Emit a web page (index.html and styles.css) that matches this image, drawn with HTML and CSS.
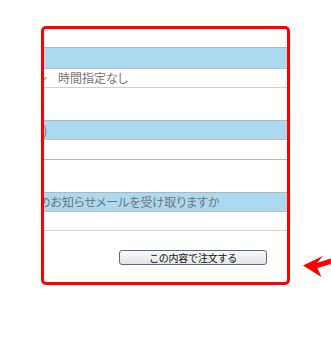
FILE: index.html
```html
<!DOCTYPE html>
<html>
<head>
    <title>ご注文内容の確認</title>
    <link rel="stylesheet" href="styles.css">
</head>
<body>
    <div class="page">
        <div class="confirm-box">
            <div class="spacer-top"></div>
            <div class="row row-blue row-first"></div>
            <div class="row row-text"><span class="cut">～</span><span class="value">時間指定なし</span></div>
            <div class="gap"></div>
            <div class="row row-blue"><span class="cut-paren">)</span></div>
            <div class="row row-empty"></div>
            <div class="gap"></div>
            <div class="row row-blue"><span class="cut-text">のお知らせメールを受け取りますか</span></div>
            <div class="row row-empty row-last"></div>
            <div class="submit-area">
                <button type="button" class="order-button">この内容で注文する</button>
            </div>
        </div>
        <!-- annotation arrow pointing at the order button -->
        <svg class="arrow" width="28" height="23" viewBox="0 0 28 23">
            <polygon points="0,10.5 20,1 14,8 28,3.5 28,9 14.5,13 18.5,22" fill="#ff0000"/>
        </svg>
    </div>
</body>
</html>
```

FILE: styles.css
```css
body {
    margin: 0;
    background-color: #fff;
    font-family: "Noto Sans CJK JP", "Noto Sans", sans-serif;
}
.page {
    display: flex;
    padding: 26px 0 0 41px;
}
.confirm-box {
    box-sizing: border-box;
    width: 250px;
    height: 259px;
    border: 3px solid #ff0000;
    border-radius: 5px;
    overflow: hidden;
    background: #fff;
}
.spacer-top {
    height: 18px;
}
.row {
    box-sizing: border-box;
    display: flex;
    align-items: center;
    font-size: 12px;
    color: #747474;
    white-space: nowrap;
    line-height: 1;
    font-feature-settings: "palt";
}
.row-blue {
    height: 20px;
    background-color: #aad9f0;
    border-top: 1px solid #b4b4b4;
    border-bottom: 1px solid #c0c0c0;
}
.row-first {
    height: 22px;
}
.row-text {
    height: 19px;
    border-bottom: 1px solid #cfcfcf;
}
.row-empty {
    height: 20px;
    border-bottom: 1px solid #b8b8b8;
}
.row-last {
    height: 19px;
    border-bottom-color: #cfcfcf;
}
.gap {
    height: 32px;
}
.cut {
    margin-left: -9px;
}
.value {
    margin-left: 11px;
}
.cut-paren {
    margin-left: -1px;
    font-size: 13px;
}
.cut-text {
    margin-left: -5px;
}
.submit-area {
    display: flex;
    padding: 19px 0 0 75px;
}
.order-button {
    box-sizing: border-box;
    width: 148px;
    height: 15px;
    padding: 0;
    border: 1px solid #4f6c8c;
    border-radius: 3px;
    background: linear-gradient(#fafafa, #e4e4e4);
    color: #111;
    font-family: "Noto Sans CJK JP", sans-serif;
    font-size: 10px;
    letter-spacing: -0.2px;
    line-height: 12px;
    cursor: pointer;
}
.arrow {
    margin: 229px 0 0 13px;
}
```
